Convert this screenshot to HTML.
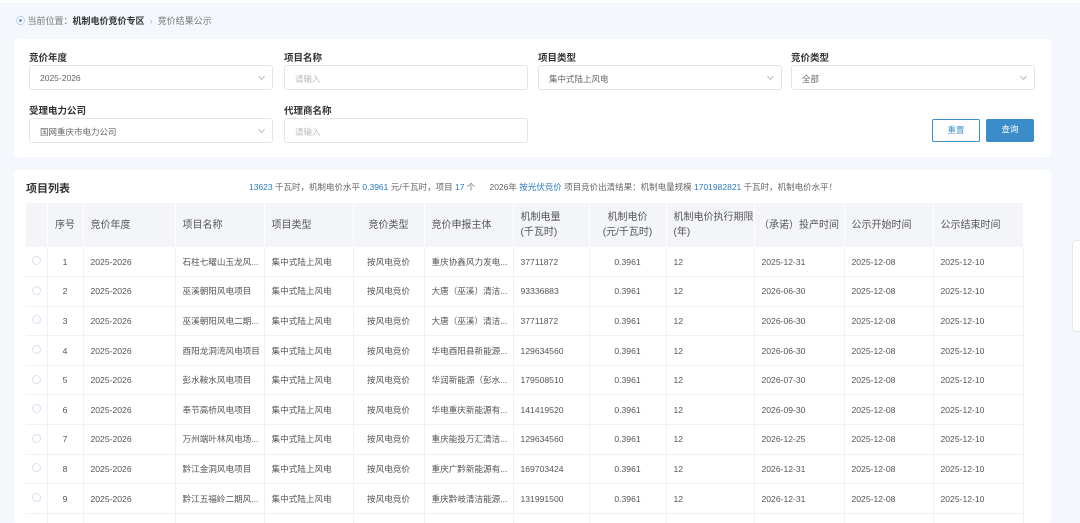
<!DOCTYPE html>
<html style="width:1080px;height:523px;overflow:hidden"><head><meta charset="utf-8"><style>
*{margin:0;padding:0;box-sizing:border-box}
body{width:1080px;height:523px;overflow:hidden;background:#f4f7fb;font-family:"Liberation Sans","Noto Sans CJK SC",sans-serif;color:#555;position:relative;font-size:9px}
.topbar{position:absolute;left:0;top:0;width:1080px;height:3px;background:#fff}
.bc{position:absolute;left:16px;top:14px;font-size:9px;color:#777}
.bc b{color:#333}
.card{position:absolute;background:#fff;border-radius:3px}
.lbl{position:absolute;font-size:9.5px;font-weight:bold;color:#333}
.inp{position:absolute;height:25px;border:1px solid #e2e5ea;border-radius:3px;font-size:8.5px;color:#666;padding:7px 10px}
.inp.ph{color:#bbb}
.inp .ar{position:absolute;right:8px;top:8px;width:5px;height:5px;border-right:1px solid #bbb;border-bottom:1px solid #bbb;transform:rotate(45deg)}
.btn{position:absolute;height:23px;width:48px;border-radius:2px;font-size:8.5px;text-align:center;line-height:21px}
table{position:absolute;left:26px;top:203px;border-collapse:collapse;table-layout:fixed;width:997px}
th{background:#f3f5f8;height:44px;font-weight:normal;color:#555;font-size:10px;text-align:left;padding-left:7px;border-right:1px solid #fff;line-height:15px}
td{height:29.6px;border-bottom:1px solid #eef1f5;border-right:1px solid #eef1f5;font-size:8.6px;color:#555;padding-left:7px;white-space:nowrap;overflow:hidden}
.c{text-align:center;padding-left:0}
.rd{display:inline-block;width:9px;height:9px;border:1px solid #dde;border-radius:50%}
.bl{color:#2a7bc4}
</style></head><body>
<div class="topbar"></div>
<div class="bc"><span style="color:#6a9ccc">⦿</span> 当前位置：<b>机制电价竞价专区</b> &nbsp;<span style="color:#bbb">›</span>&nbsp; 竞价结果公示</div>
<div class="card" style="left:14px;top:39px;width:1037px;height:118px">
<div class="lbl" style="left:15px;top:11px">竞价年度</div>
<div class="inp" style="left:15px;top:26px;width:244px">2025-2026<span class="ar"></span></div>
<div class="lbl" style="left:270px;top:11px">项目名称</div>
<div class="inp ph" style="left:270px;top:26px;width:244px">请输入</div>
<div class="lbl" style="left:524px;top:11px">项目类型</div>
<div class="inp" style="left:524px;top:26px;width:244px">集中式陆上风电<span class="ar"></span></div>
<div class="lbl" style="left:777px;top:11px">竞价类型</div>
<div class="inp" style="left:777px;top:26px;width:244px">全部<span class="ar"></span></div>
<div class="lbl" style="left:15px;top:64px">受理电力公司</div>
<div class="inp" style="left:15px;top:79px;width:244px">国网重庆市电力公司<span class="ar"></span></div>
<div class="lbl" style="left:270px;top:64px">代理商名称</div>
<div class="inp ph" style="left:270px;top:79px;width:244px">请输入</div>
<div class="btn" style="left:918px;top:80px;border:1px solid #3b8fca;color:#3b8fca">重置</div>
<div class="btn" style="left:972px;top:80px;background:#3a8dc9;color:#fff">查询</div>
</div>
<div class="card" style="left:14px;top:170px;width:1037px;height:353px;overflow:hidden">
</div>
<div style="position:absolute;left:26px;top:180px;font-size:11px;font-weight:bold;color:#333">项目列表</div>
<div style="position:absolute;left:249px;top:181px;font-size:8.5px;color:#666;white-space:nowrap"><span class="bl">13623</span> 千瓦时，机制电价水平 <span class="bl">0.3961</span> 元/千瓦时，项目 <span class="bl">17</span> 个 &nbsp; &nbsp; &nbsp;2026年 <span class="bl">按光伏竞价</span> 项目竞价出清结果：机制电量规模 <span class="bl">1701982821</span> 千瓦时，机制电价水平！</div>
<table>
<colgroup><col style="width:21px"><col style="width:36px"><col style="width:92px"><col style="width:89px"><col style="width:89px"><col style="width:71px"><col style="width:89px"><col style="width:76px"><col style="width:77px"><col style="width:88px"><col style="width:90px"><col style="width:89px"><col style="width:90px"></colgroup>
<tr><th></th><th class="c">序号</th><th>竞价年度</th><th>项目名称</th><th>项目类型</th><th class="c">竞价类型</th><th>竞价申报主体</th><th>机制电量<br>(千瓦时)</th><th class="c">机制电价<br>(元/千瓦时)</th><th>机制电价执行期限<br>(年)</th><th class="c">（承诺）投产时间</th><th>公示开始时间</th><th>公示结束时间</th></tr>
<tr><td class="c"><span class="rd"></span></td><td class="c">1</td><td>2025-2026</td><td>石柱七曜山玉龙风...</td><td>集中式陆上风电</td><td class="c">按风电竞价</td><td>重庆协鑫风力发电...</td><td>37711872</td><td class="c">0.3961</td><td>12</td><td>2025-12-31</td><td>2025-12-08</td><td>2025-12-10</td></tr>
<tr><td class="c"><span class="rd"></span></td><td class="c">2</td><td>2025-2026</td><td>巫溪朝阳风电项目</td><td>集中式陆上风电</td><td class="c">按风电竞价</td><td>大唐（巫溪）清洁...</td><td>93336883</td><td class="c">0.3961</td><td>12</td><td>2026-06-30</td><td>2025-12-08</td><td>2025-12-10</td></tr>
<tr><td class="c"><span class="rd"></span></td><td class="c">3</td><td>2025-2026</td><td>巫溪朝阳风电二期...</td><td>集中式陆上风电</td><td class="c">按风电竞价</td><td>大唐（巫溪）清洁...</td><td>37711872</td><td class="c">0.3961</td><td>12</td><td>2026-06-30</td><td>2025-12-08</td><td>2025-12-10</td></tr>
<tr><td class="c"><span class="rd"></span></td><td class="c">4</td><td>2025-2026</td><td>酉阳龙洞湾风电项目</td><td>集中式陆上风电</td><td class="c">按风电竞价</td><td>华电酉阳县新能源...</td><td>129634560</td><td class="c">0.3961</td><td>12</td><td>2026-06-30</td><td>2025-12-08</td><td>2025-12-10</td></tr>
<tr><td class="c"><span class="rd"></span></td><td class="c">5</td><td>2025-2026</td><td>彭水鞍水风电项目</td><td>集中式陆上风电</td><td class="c">按风电竞价</td><td>华润新能源（彭水...</td><td>179508510</td><td class="c">0.3961</td><td>12</td><td>2026-07-30</td><td>2025-12-08</td><td>2025-12-10</td></tr>
<tr><td class="c"><span class="rd"></span></td><td class="c">6</td><td>2025-2026</td><td>奉节高桥风电项目</td><td>集中式陆上风电</td><td class="c">按风电竞价</td><td>华电重庆新能源有...</td><td>141419520</td><td class="c">0.3961</td><td>12</td><td>2026-09-30</td><td>2025-12-08</td><td>2025-12-10</td></tr>
<tr><td class="c"><span class="rd"></span></td><td class="c">7</td><td>2025-2026</td><td>万州端叶林风电场...</td><td>集中式陆上风电</td><td class="c">按风电竞价</td><td>重庆能投万汇清洁...</td><td>129634560</td><td class="c">0.3961</td><td>12</td><td>2026-12-25</td><td>2025-12-08</td><td>2025-12-10</td></tr>
<tr><td class="c"><span class="rd"></span></td><td class="c">8</td><td>2025-2026</td><td>黔江金洞风电项目</td><td>集中式陆上风电</td><td class="c">按风电竞价</td><td>重庆广黔新能源有...</td><td>169703424</td><td class="c">0.3961</td><td>12</td><td>2026-12-31</td><td>2025-12-08</td><td>2025-12-10</td></tr>
<tr><td class="c"><span class="rd"></span></td><td class="c">9</td><td>2025-2026</td><td>黔江五福岭二期风...</td><td>集中式陆上风电</td><td class="c">按风电竞价</td><td>重庆黔岐清洁能源...</td><td>131991500</td><td class="c">0.3961</td><td>12</td><td>2026-12-31</td><td>2025-12-08</td><td>2025-12-10</td></tr>
<tr><td></td><td></td><td></td><td></td><td></td><td></td><td></td><td></td><td></td><td></td><td></td><td></td><td></td></tr>
</table>
<div style="position:absolute;left:1072px;top:240px;width:12px;height:92px;background:#fff;border:1px solid #e5e8ee;border-radius:4px"></div>
</body></html>
